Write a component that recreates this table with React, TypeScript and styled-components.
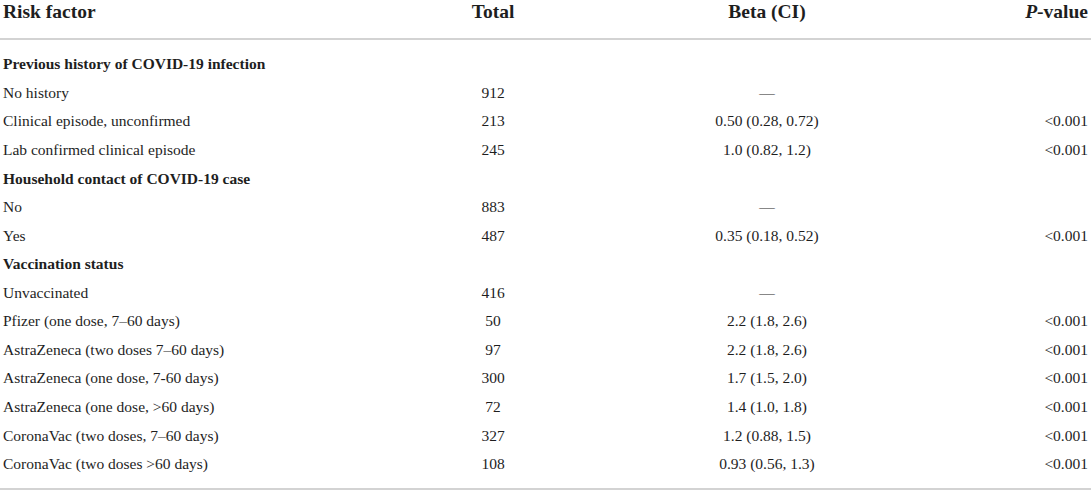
import React from "react";
import styled, { createGlobalStyle } from "styled-components";

const Global = createGlobalStyle`
  html, body { margin: 0; padding: 0; background: #fff; }
  body { font-family: "Liberation Serif", "DejaVu Serif", serif; color: #1e1e1e; }
`;

const Table = styled.div`
  width: 1091px;
  box-sizing: border-box;
`;

const Grid = styled.div`
  display: grid;
  grid-template-columns: 390px 200px 348px 1fr;
  padding: 0 3px;
`;

const HeadRow = styled(Grid)`
  height: 38px;
  align-items: center;
  border-bottom: 2px solid #d3d3d3;
`;

const HeadCell = styled.div<{ $align: "left" | "center" | "right" }>`
  font-size: 19.5px;
  font-weight: 700;
  text-align: ${(p) => p.$align};
  padding-bottom: 14px;
`;

const Body = styled(Grid)`
  grid-auto-rows: 28.57px;
  align-items: center;
  padding-top: 10px;
  padding-bottom: 10px;
  border-bottom: 2px solid #d3d3d3;
`;

const Cell = styled.div<{ $align: "left" | "center" | "right"; $bold?: boolean }>`
  font-size: 15.5px;
  font-weight: ${(p) => (p.$bold ? 700 : 400)};
  text-align: ${(p) => p.$align};
  white-space: nowrap;
`;

type Row = { label: string; section?: boolean; total?: string; beta?: string; p?: string };

const rows: Row[] = [
  { label: "Previous history of COVID-19 infection", section: true },
  { label: "No history", total: "912", beta: "—" },
  { label: "Clinical episode, unconfirmed", total: "213", beta: "0.50 (0.28, 0.72)", p: "<0.001" },
  { label: "Lab confirmed clinical episode", total: "245", beta: "1.0 (0.82, 1.2)", p: "<0.001" },
  { label: "Household contact of COVID-19 case", section: true },
  { label: "No", total: "883", beta: "—" },
  { label: "Yes", total: "487", beta: "0.35 (0.18, 0.52)", p: "<0.001" },
  { label: "Vaccination status", section: true },
  { label: "Unvaccinated", total: "416", beta: "—" },
  { label: "Pfizer (one dose, 7–60 days)", total: "50", beta: "2.2 (1.8, 2.6)", p: "<0.001" },
  { label: "AstraZeneca (two doses 7–60 days)", total: "97", beta: "2.2 (1.8, 2.6)", p: "<0.001" },
  { label: "AstraZeneca (one dose, 7-60 days)", total: "300", beta: "1.7 (1.5, 2.0)", p: "<0.001" },
  { label: "AstraZeneca (one dose, >60 days)", total: "72", beta: "1.4 (1.0, 1.8)", p: "<0.001" },
  { label: "CoronaVac (two doses, 7–60 days)", total: "327", beta: "1.2 (0.88, 1.5)", p: "<0.001" },
  { label: "CoronaVac (two doses >60 days)", total: "108", beta: "0.93 (0.56, 1.3)", p: "<0.001" },
];

export default function App() {
  return (
    <>
      <Global />
      <Table>
        <HeadRow>
          <HeadCell $align="left">Risk factor</HeadCell>
          <HeadCell $align="center">Total</HeadCell>
          <HeadCell $align="center">Beta (CI)</HeadCell>
          <HeadCell $align="right">
            <i>P</i>-value
          </HeadCell>
        </HeadRow>
        <Body>
          {rows.map((r, i) => (
            <React.Fragment key={i}>
              <Cell $align="left" $bold={r.section}>{r.label}</Cell>
              <Cell $align="center">{r.total ?? ""}</Cell>
              <Cell $align="center">{r.beta ?? ""}</Cell>
              <Cell $align="right">{r.p ?? ""}</Cell>
            </React.Fragment>
          ))}
        </Body>
      </Table>
    </>
  );
}
